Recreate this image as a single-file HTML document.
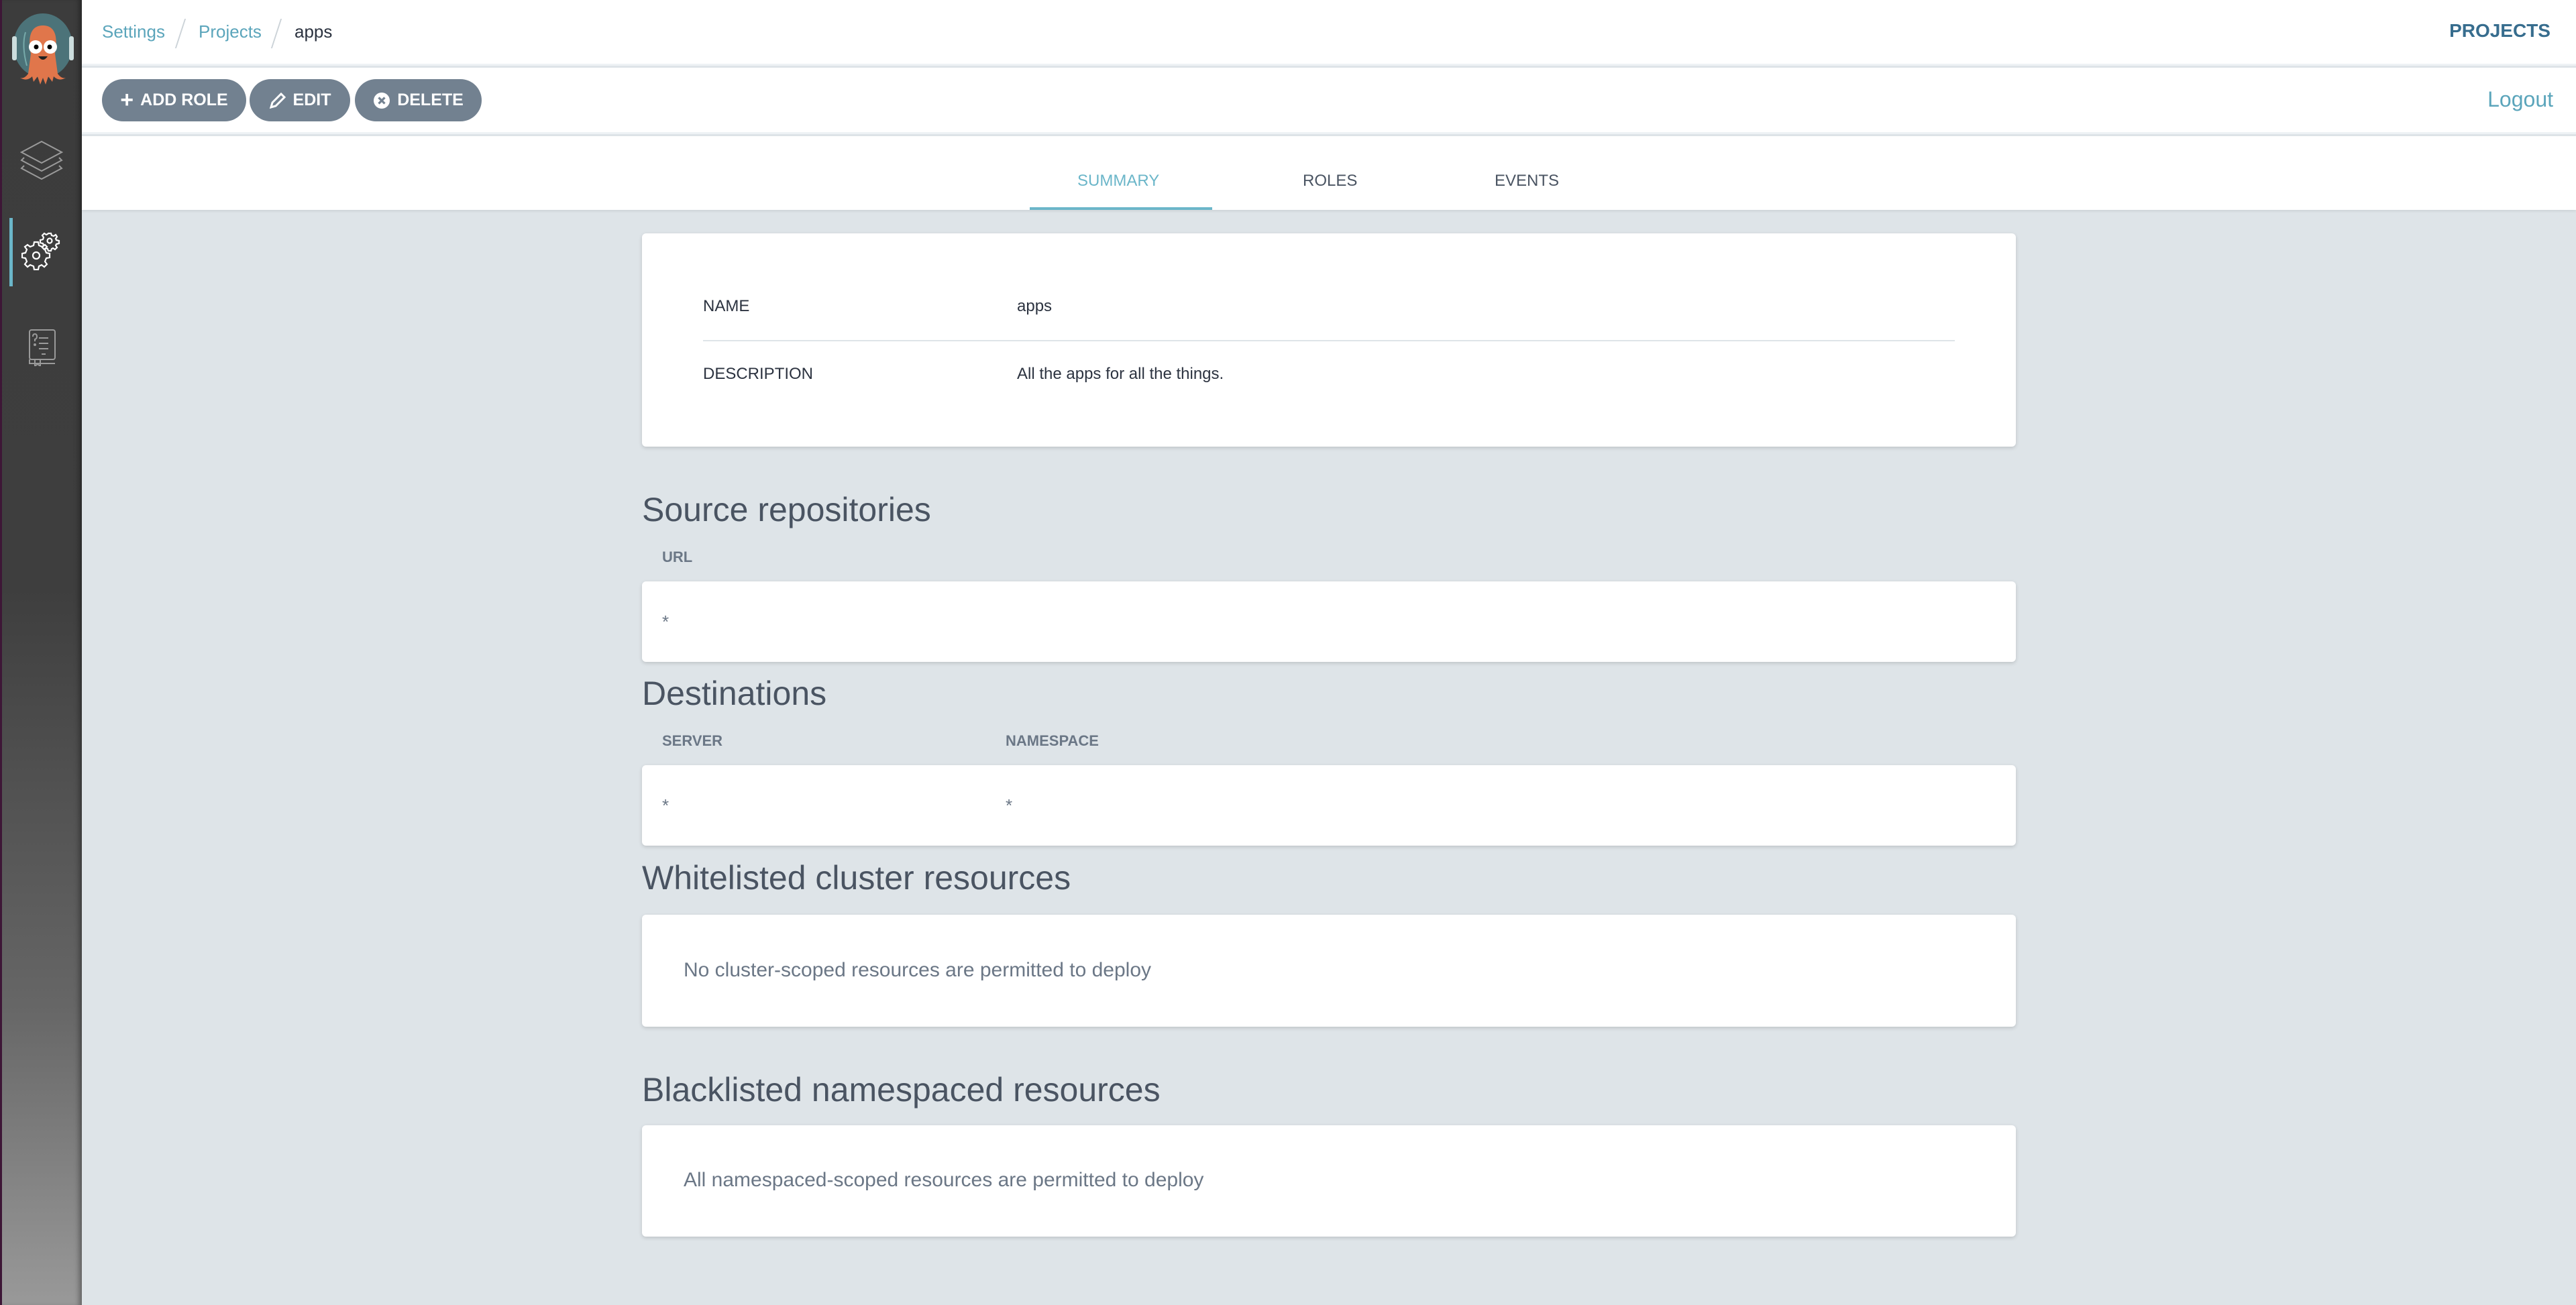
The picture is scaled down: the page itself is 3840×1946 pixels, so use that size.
<!DOCTYPE html>
<html><head><meta charset="utf-8"><style>
*{margin:0;padding:0;box-sizing:border-box}
body{width:3840px;height:1946px;overflow:hidden;background:#dee4e8;font-family:"Liberation Sans",sans-serif;position:relative}
.abs{position:absolute}
#side{left:0;top:0;width:122px;height:1946px;background:linear-gradient(#3c3c3c 0,#3e3e3e 45%,#666 77%,#999 100%);box-shadow:inset -8px 0 8px -4px rgba(0,0,0,.35)}
#side:before{content:"";position:absolute;left:0;top:0;width:3px;height:100%;background:#3d1636}
.hdr{left:122px;right:0;background:#fff}
.t{white-space:nowrap;line-height:1}
.btn{top:118px;height:63px;border-radius:32px;background:#728190;color:#fff;font-size:25px;font-weight:bold;display:flex;align-items:center;justify-content:center;gap:10px}
.card{background:#fff;border-radius:6px;box-shadow:0 2px 6px rgba(0,0,0,.15);left:957px;width:2048px}
.h{font-size:50px;color:#4a5462;left:957px}
.lbl{font-size:22px;color:#6b7786;font-weight:bold}
.star{font-size:26px;color:#6b7786}
.msg{font-size:30px;color:#6b7786;left:1019px}
</style></head><body>
<div id="side" class="abs">
 <svg class="abs" style="left:14px;top:18px" width="100" height="120" viewBox="0 0 100 120">
  <ellipse cx="50" cy="50" rx="44" ry="48" fill="#4c7379"/>
  <path d="M24 30 Q18 50 26 80" stroke="#7aa" stroke-width="2" fill="none"/>
  <rect x="4" y="36" width="7" height="36" rx="3" fill="#cdd"/><rect x="89" y="36" width="7" height="36" rx="3" fill="#cdd"/>
  <path d="M32 62 C26 30 36 20 50 20 C64 20 74 30 68 62 L72 92 Q78 100 84 98 Q74 104 66 96 L64 104 L58 96 L54 108 L50 98 L46 108 L42 96 L36 104 L34 96 Q26 104 16 98 Q22 100 28 92 Z" fill="#e0764b"/>
  <circle cx="39" cy="52" r="10" fill="#fff"/><circle cx="61" cy="52" r="10" fill="#fff"/>
  <circle cx="40" cy="52" r="3.5" fill="#000"/><circle cx="60" cy="52" r="3.5" fill="#000"/>
  <path d="M43 66 Q50 76 57 66 Z" fill="#222"/>
 </svg>
 <svg class="abs" style="left:30px;top:205px" width="64" height="64" viewBox="0 0 64 64" fill="none" stroke="#9a9a9a" stroke-width="2">
  <path d="M2 22 L32 6 L62 22 L32 38 Z"/><path d="M6 30 L2 34 L32 50 L62 34 L58 30"/><path d="M6 42 L2 46 L32 62 L62 46 L58 42"/>
 </svg>
 <div class="abs" style="left:14px;top:325px;width:5px;height:102px;background:#6bb6c9"></div>
 <svg class="abs" style="left:32px;top:345px" width="58" height="58" viewBox="0 0 58 58" fill="none" stroke="#fff" stroke-width="2.2">
  <circle cx="22" cy="36" r="5"/><path d="M22 16 L25 16 L26 21 L31 23 L35 20 L38 23 L35 27 L37 32 L42 33 L42 39 L37 40 L35 45 L38 49 L34 53 L30 50 L26 52 L25 57 L19 57 L18 52 L13 50 L9 53 L5 49 L8 45 L6 40 L1 39 L1 33 L6 32 L8 27 L5 23 L9 20 L13 23 L18 21 L19 16 Z"/>
  <circle cx="42" cy="14" r="3.5"/><path d="M40 3 L44 3 L45 6 L48 7 L51 5 L53 8 L51 11 L52 13 L56 14 L56 18 L52 19 L51 21 L53 24 L50 27 L47 25 L45 26 L44 29 L40 29 L39 26 L36 25 L34 27 L31 24 L33 21 L32 18 L28 17 L28 13 L32 12 L33 9 L31 6 L34 3 L37 5 L39 4 Z"/>
 </svg>
 <svg class="abs" style="left:42px;top:490px" width="42" height="56" viewBox="0 0 42 56" fill="none" stroke="#9a9a9a" stroke-width="2">
  <rect x="2" y="2" width="38" height="44" rx="3"/><path d="M2 46 L2 52 L40 52"/><path d="M10 46 L10 56 L14 53 L18 56 L18 46"/>
  <path d="M16 14 H30 M16 22 H30 M16 30 H30 M20 38 H26"/><path d="M7 12 Q7 8 10 8 Q13 8 13 12 Q13 15 10 16 L10 19"/><circle cx="10" cy="24" r="1"/>
 </svg>
</div>
<div class="abs hdr" style="top:0;height:98px;border-bottom:3px solid #eef2f5"></div>
<div class="abs t" style="left:152px;top:34px;font-size:26px;color:#5ba5bb">Settings</div>
<div class="abs" style="left:268px;top:28px;width:2px;height:44px;background:#ccd3d8;transform:skewX(-18deg)"></div>
<div class="abs t" style="left:296px;top:34px;font-size:26px;color:#5ba5bb">Projects</div>
<div class="abs" style="left:411px;top:28px;width:2px;height:44px;background:#ccd3d8;transform:skewX(-18deg)"></div>
<div class="abs t" style="left:439px;top:34px;font-size:26px;color:#2c3340">apps</div>
<div class="abs t" style="right:38px;top:32px;font-size:28px;font-weight:bold;color:#376d8e">PROJECTS</div>
<div class="abs hdr" style="top:101px;height:99px;border-bottom:3px solid #eef2f5"></div>
<div class="abs btn" style="left:152px;width:215px"><span style="font-size:34px;font-weight:bold">+</span>ADD ROLE</div>
<div class="abs btn" style="left:372px;width:150px"><svg width="26" height="26" viewBox="0 0 26 26"><path d="M3 23 L5 16 L18 3 L23 8 L10 21 Z" fill="none" stroke="#fff" stroke-width="3"/></svg>EDIT</div>
<div class="abs btn" style="left:529px;width:189px"><svg width="26" height="26" viewBox="0 0 26 26"><circle cx="13" cy="13" r="12" fill="#fff"/><path d="M8.5 8.5 L17.5 17.5 M17.5 8.5 L8.5 17.5" stroke="#728190" stroke-width="3.2"/></svg>DELETE</div>
<div class="abs t" style="right:34px;top:132px;font-size:32px;color:#5ba5bb">Logout</div>
<div class="abs hdr" style="top:203px;height:110px;box-shadow:0 2px 4px rgba(0,0,0,.08)"></div>
<div class="abs t" style="left:1606px;top:258px;font-size:24px;color:#6bb6c9">SUMMARY</div>
<div class="abs" style="left:1535px;top:309px;width:272px;height:4px;background:#6bb6c9"></div>
<div class="abs t" style="left:1942px;top:258px;font-size:24px;color:#4a5462">ROLES</div>
<div class="abs t" style="left:2228px;top:258px;font-size:24px;color:#4a5462">EVENTS</div>

<div class="abs card" style="top:348px;height:318px"></div>
<div class="abs t" style="left:1048px;top:445px;font-size:24px;color:#2c3340">NAME</div>
<div class="abs t" style="left:1516px;top:445px;font-size:24px;color:#2c3340">apps</div>
<div class="abs" style="left:1048px;top:507px;width:1866px;height:2px;background:#dee4e8"></div>
<div class="abs t" style="left:1048px;top:546px;font-size:24px;color:#2c3340">DESCRIPTION</div>
<div class="abs t" style="left:1516px;top:546px;font-size:24px;color:#2c3340">All the apps for all the things.</div>

<div class="abs t h" style="top:735px">Source repositories</div>
<div class="abs t lbl" style="left:987px;top:820px">URL</div>
<div class="abs card" style="top:867px;height:120px"></div>
<div class="abs t star" style="left:987px;top:914px">*</div>

<div class="abs t h" style="top:1009px">Destinations</div>
<div class="abs t lbl" style="left:987px;top:1094px">SERVER</div>
<div class="abs t lbl" style="left:1499px;top:1094px">NAMESPACE</div>
<div class="abs card" style="top:1141px;height:120px"></div>
<div class="abs t star" style="left:987px;top:1188px">*</div>
<div class="abs t star" style="left:1499px;top:1188px">*</div>

<div class="abs t h" style="top:1284px">Whitelisted cluster resources</div>
<div class="abs card" style="top:1364px;height:167px"></div>
<div class="abs t msg" style="top:1432px">No cluster-scoped resources are permitted to deploy</div>

<div class="abs t h" style="top:1600px">Blacklisted namespaced resources</div>
<div class="abs card" style="top:1678px;height:166px"></div>
<div class="abs t msg" style="top:1745px">All namespaced-scoped resources are permitted to deploy</div>
</body></html>
